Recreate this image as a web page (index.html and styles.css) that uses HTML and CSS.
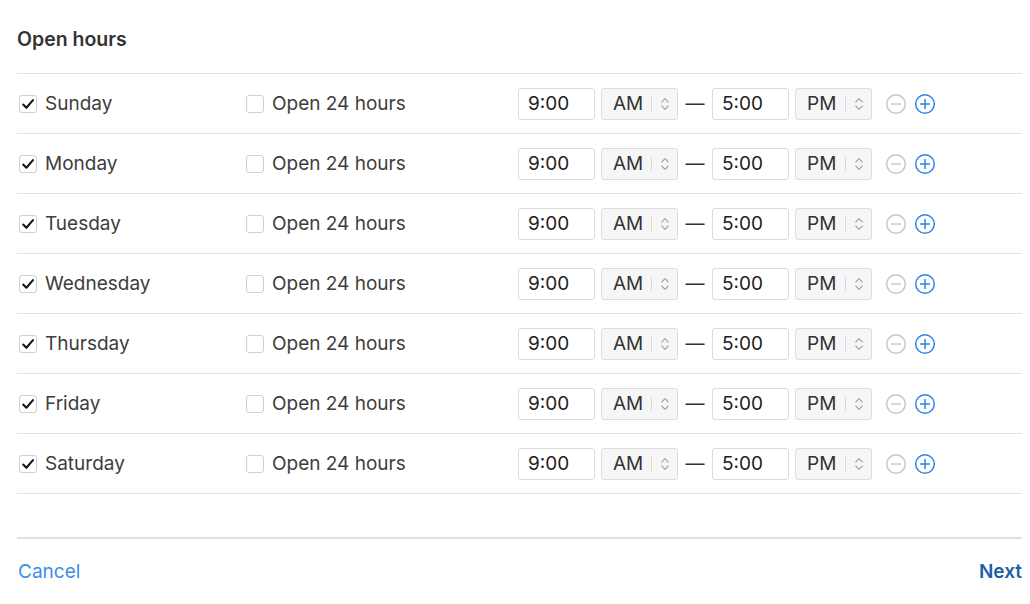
FILE: index.html
```html
<!DOCTYPE html>
<html>
<head>
<meta charset="utf-8">
<link rel="stylesheet" href="styles.css">
</head>
<body>
<div class="page">
  <h1 class="title">Open hours</h1>
  <div class="rows" id="rows"></div>
  <div class="footer">
    <a class="cancel">Cancel</a>
    <a class="next">Next</a>
  </div>
</div>
<template id="row-tpl">
  <div class="row">
    <div class="day">
      <span class="cb checked"><svg viewBox="0 0 18 18" width="18" height="18"><path d="M3.6 9.6 L7.2 13.2 L14.6 4.6" fill="none" stroke="#111" stroke-width="2.3" stroke-linecap="round" stroke-linejoin="round"/></svg></span>
      <span class="day-name"></span>
    </div>
    <div class="open24">
      <span class="cb"></span>
      <span>Open 24 hours</span>
    </div>
    <div class="times">
      <div class="tinput">9:00</div>
      <div class="sel"><span class="sel-text">AM</span><span class="sep"></span><svg class="chev" viewBox="0 0 10 16" width="10" height="16"><path d="M1.8 6 L5 2.6 L8.2 6 M1.8 10 L5 13.4 L8.2 10" fill="none" stroke="#a5a5a5" stroke-width="1.1" stroke-linecap="round" stroke-linejoin="round"/></svg></div>
      <span class="dash">—</span>
      <div class="tinput">5:00</div>
      <div class="sel"><span class="sel-text">PM</span><span class="sep"></span><svg class="chev" viewBox="0 0 10 16" width="10" height="16"><path d="M1.8 6 L5 2.6 L8.2 6 M1.8 10 L5 13.4 L8.2 10" fill="none" stroke="#a5a5a5" stroke-width="1.1" stroke-linecap="round" stroke-linejoin="round"/></svg></div>
      <svg class="icon" viewBox="0 0 22 22" width="22" height="22"><circle cx="11" cy="11" r="9.3" fill="none" stroke="#c4c4c4" stroke-width="1.4"/><path d="M6 11 H16" stroke="#c4c4c4" stroke-width="1.4"/></svg>
      <svg class="icon plus" viewBox="0 0 22 22" width="22" height="22"><circle cx="11" cy="11" r="9.3" fill="none" stroke="#2d85f0" stroke-width="1.5"/><path d="M6 11 H16 M11 6 V16" stroke="#2d85f0" stroke-width="1.5"/></svg>
    </div>
  </div>
</template>
<script>
  var days = ["Sunday","Monday","Tuesday","Wednesday","Thursday","Friday","Saturday"];
  var tpl = document.getElementById("row-tpl");
  var rows = document.getElementById("rows");
  days.forEach(function(d){
    var n = tpl.content.cloneNode(true);
    n.querySelector(".day-name").textContent = d;
    rows.appendChild(n);
  });
</script>
</body>
</html>
```

FILE: styles.css
```css
html, body {
  margin: 0;
  padding: 0;
  background: #fff;
}
body {
  font-family: Inter, "Noto Sans", "Liberation Sans", sans-serif;
  color: #333;
}
.page {
  width: 1005px;
  padding-left: 17px;
}
.title {
  margin: 0;
  height: 74px;
  box-sizing: border-box;
  padding-top: 27px;
  font-size: 19.5px;
  font-weight: 600;
  line-height: 24px;
  color: #333;
  border-bottom: 1px solid #e3e3e3;
}
.row {
  display: grid;
  grid-template-columns: 229px 272px 1fr;
  align-items: center;
  height: 60px;
  box-sizing: border-box;
  border-bottom: 1px solid #e3e3e3;
  font-size: 19px;
  color: #3d3d3d;
}
.day, .open24 {
  display: flex;
  align-items: center;
  gap: 8px;
}
.day {
  padding-left: 2px;
}
.cb {
  width: 16px;
  height: 16px;
  border: 1px solid #cfcfcf;
  border-radius: 3px;
  background: #fff;
  display: inline-flex;
  align-items: center;
  justify-content: center;
  flex: none;
}
.cb svg { display: block; }
.times {
  display: flex;
  align-items: center;
}
.tinput {
  width: 66px;
  height: 30px;
  padding-left: 9px;
  border: 1px solid #dcdcdc;
  border-radius: 3px;
  line-height: 30px;
  background: #fff;
  color: #222;
}
.sel {
  margin-left: 6px;
  width: 75px;
  height: 30px;
  border: 1px solid #dcdcdc;
  border-radius: 3px;
  background: #f6f6f6;
  display: flex;
  align-items: center;
  box-sizing: content-box;
}
.sel-text {
  padding-left: 11px;
  width: 38px;
  color: #333;
}
.sep {
  width: 1px;
  height: 14px;
  background: #d6d6d6;
}
.chev {
  margin-left: 8px;
}
.dash {
  width: 34px;
  text-align: center;
  color: #333;
}
.icon {
  margin-left: 13px;
  display: block;
}
.icon.plus {
  margin-left: 7px;
}
.footer {
  margin-top: 43px;
  border-top: 2px solid #e0e0e0;
  display: flex;
  justify-content: space-between;
  align-items: center;
  padding-top: 20px;
  font-size: 19px;
  line-height: 26px;
}
.cancel {
  color: #3a8ee8;
  padding-left: 1px;
}
.next {
  color: #1f5fa6;
  font-weight: 600;
}
```
